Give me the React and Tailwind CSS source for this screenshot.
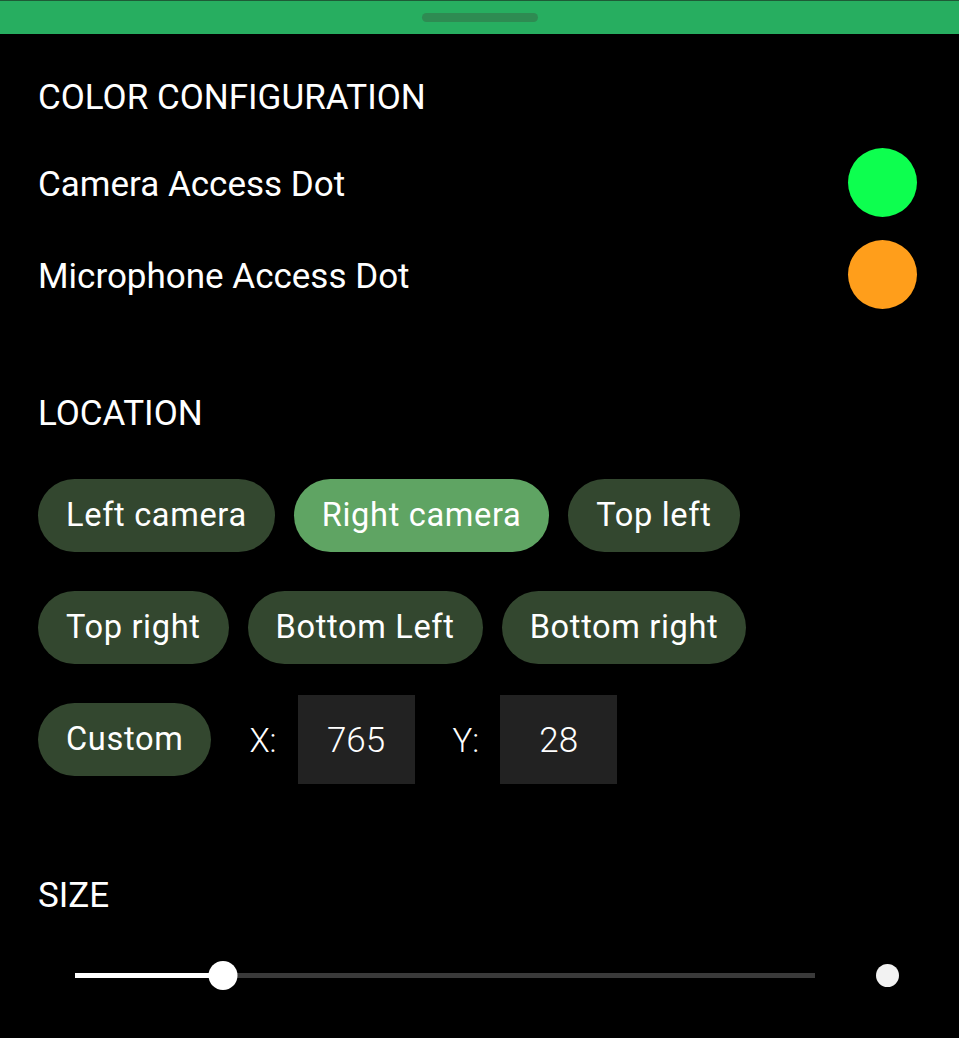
import React, { useState } from 'react';

const chipsRow1 = ['Left camera', 'Right camera', 'Top left'];
const chipsRow2 = ['Top right', 'Bottom Left', 'Bottom right'];

const Chip = ({ label, active, onClick }) => (
  <button
    onClick={onClick}
    className={`h-[73px] px-[28px] rounded-full text-[32.6px] tracking-[0.02em] text-white flex items-center ${
      active ? 'bg-[#5fa463]' : 'bg-[#33472f]'
    }`}
  >
    {label}
  </button>
);

const App = () => {
  const [location, setLocation] = useState('Right camera');
  const [size] = useState(20);

  return (
    <div className="min-h-[1038px] bg-black text-white font-['Roboto',sans-serif]">
      {/* sheet handle */}
      <div className="h-[34px] bg-[#27ae60] flex items-start justify-center border-t border-[#1e5a36]">
        <div className="mt-[12px] w-[116px] h-[9px] rounded-full bg-[#2e8b52]" />
      </div>

      <div className="px-[38px]">
        <h2 className="mt-[44px] h-[40px] leading-[40px] text-[35px]">COLOR CONFIGURATION</h2>

        <div className="mt-[30px] flex items-center justify-between">
          <span className="pt-[5px] text-[35px]">Camera Access Dot</span>
          <div className="w-[69px] h-[69px] rounded-full bg-[#0dff4f] mr-[4px]" />
        </div>
        <div className="mt-[23px] flex items-center justify-between">
          <span className="pt-[5px] text-[35px]">Microphone Access Dot</span>
          <div className="w-[69px] h-[69px] rounded-full bg-[#ff9e1b] mr-[4px]" />
        </div>

        <h2 className="mt-[85px] h-[40px] leading-[40px] text-[35px]">LOCATION</h2>

        <div className="mt-[45px] flex gap-[19px]">
          {chipsRow1.map((c) => (
            <Chip key={c} label={c} active={location === c} onClick={() => setLocation(c)} />
          ))}
        </div>
        <div className="mt-[39px] flex gap-[19px]">
          {chipsRow2.map((c) => (
            <Chip key={c} label={c} active={location === c} onClick={() => setLocation(c)} />
          ))}
        </div>
        <div className="mt-[31px] flex items-center">
          <Chip label="Custom" active={location === 'Custom'} onClick={() => setLocation('Custom')} />
          <span className="ml-[38px] pt-[3px] text-[33px] font-light">X:</span>
          <div className="ml-[21px] w-[117px] h-[89px] pt-[4px] bg-[#222222] flex items-center justify-center text-[35px] font-light">
            765
          </div>
          <span className="ml-[38px] pt-[3px] text-[33px] font-light">Y:</span>
          <div className="ml-[21px] w-[117px] h-[89px] pt-[4px] bg-[#222222] flex items-center justify-center text-[35px] font-light">
            28
          </div>
        </div>

        <h2 className="mt-[92px] h-[40px] leading-[40px] text-[35px]">SIZE</h2>

        {/* slider */}
        <div className="mt-[39px] flex items-center">
          <div className="relative ml-[37px] w-[740px] h-[40px] flex items-center">
            <div className="w-full h-[5px] bg-[#3a3a3a]" />
            <div className="absolute left-0 h-[5px] bg-white" style={{ width: `${size}%` }} />
            <div
              className="absolute w-[29px] h-[29px] rounded-full bg-white -translate-x-1/2"
              style={{ left: `${size}%` }}
            />
          </div>
          <div className="ml-[61px] w-[23px] h-[23px] rounded-full bg-[#f2f2f2]" />
        </div>
      </div>
    </div>
  );
};

export default App;
